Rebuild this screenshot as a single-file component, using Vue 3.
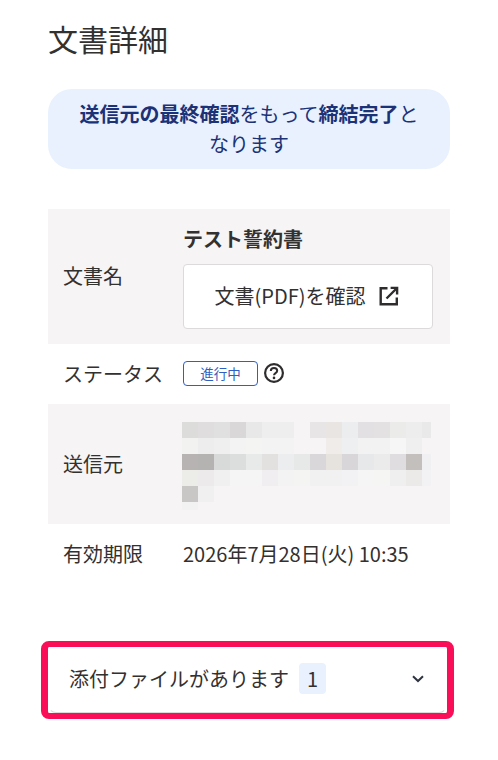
<script setup>
const rows = [
  ['#dcdcda','#dfdddd','#e0e0e0','#d9d7d8','#e9e8e9','#eeeeee','#eeeeee','','#e7e5e6','#e9e5e2','#ecedef','#e2e0e2','#e3e1e2','#ebebe9','#eeedee','#e9e9e9'],
  ['#f2f2f0','#eeedee','#f0eff0','#f4f3f4','#f4f4f2','#f4f3f4','#f4f3f4','','','#f0ecea','#eeeff0','#f3f2f3','#f3f2f3','#f7f6f7','#f0eff0',''],
  ['#b8b3b3','#b4b3b1','#d8d9d9','#dcdddd','#e8e9e9','#e2e1df','#ecedee','#e7e8e8','#d9d7d9','#e6e2de','#d8d6d9','#e7e8e9','#ecebec','#dfdddf','#c2bfbc','#f0f0f3'],
  ['#ecece9','#eceaeb','#f1f0f1','#f6f5f6','#f6f5f6','#f0eef0','#f4f3f4','#f4f4f2','#f2f1f2','#f2f1f2','#f2f1f3','#f6f5f6','#f5f5f3','#f0eff0','#ebeae8','#f2f1f3'],
  ['#c9c6c6','#f1f0f1'],
  ['#f3f2f3']
]
</script>

<template>
  <div class="page">
    <h1 class="title">文書詳細</h1>
    <p class="notice"><b>送信元の最終確認</b>をもって<b>締結完了</b>となります</p>
    <div class="table">
      <div class="row shaded">
        <div class="label">文書名</div>
        <div class="value">
          <div class="doc-name">テスト誓約書</div>
          <button class="doc-btn">
            <span class="doc-btn-text">文書(PDF)を確認</span>
            <svg class="ext" viewBox="0 0 20 20" width="20" height="20" fill="none" stroke="#2e2c2c" stroke-width="2.4">
              <path d="M8.5 2.2H1.7v16.1h16.1v-6.8" />
              <path d="M7.5 12.5 18 2M11.6 1.9h6.5v6.5" />
            </svg>
          </button>
        </div>
      </div>
      <div class="row status">
        <div class="label">ステータス</div>
        <div class="value inline">
          <span class="tag">進行中</span>
          <svg viewBox="0 0 20 20" width="20" height="20" fill="none" stroke="#2e2c2c" stroke-width="2.2">
            <circle cx="10" cy="10" r="8.9" />
            <path d="M6.8 7.9c0-1.9 1.4-3 3.2-3s3.2 1.1 3.2 2.8c0 2.4-3.2 2.4-3.2 4.5" stroke-width="2" />
            <circle cx="10" cy="14.9" r="1.3" fill="#2e2c2c" stroke="none" />
          </svg>
        </div>
      </div>
      <div class="row shaded sender">
        <div class="label">送信元</div>
        <div class="value mosaic-cell">
          <div class="mosaic">
            <div v-for="(r, i) in rows" :key="i" class="mosaic-row">
              <span v-for="(c, j) in r" :key="j" class="cell" :style="{ background: c || 'transparent' }"></span>
            </div>
          </div>
        </div>
      </div>
      <div class="row expiry">
        <div class="label">有効期限</div>
        <div class="value">2026年7月28日(火) 10:35</div>
      </div>
    </div>
    <div class="frame">
      <div class="attach">
        <div class="attach-left">
          <span>添付ファイルがあります</span>
          <span class="count">1</span>
        </div>
        <svg viewBox="0 0 12 8" width="12" height="8" fill="none" stroke="#2e3440" stroke-width="2">
          <path d="M1 1.2 6 6l5-4.8" />
        </svg>
      </div>
    </div>
  </div>
</template>

<style scoped>
.page {
  width: 498px;
  height: 760px;
  box-sizing: border-box;
  padding: 14px 48px 0;
  background: #fff;
  color: #333030;
  font-family: "Noto Sans CJK JP", "Noto Sans", sans-serif;
  overflow: hidden;
}
.title {
  margin: 0;
  font-size: 30px;
  font-weight: 400;
  line-height: 48px;
}
.notice {
  margin: 27px 0 0;
  height: 80px;
  box-sizing: border-box;
  padding: 10px 24px;
  background: #e8f1fd;
  border-radius: 24px;
  color: #1c3277;
  font-size: 20px;
  line-height: 30px;
  text-align: center;
  width: 402px;
}
.notice b { font-weight: 700; }
.table {
  margin-top: 40px;
  display: flex;
  flex-direction: column;
}
.row {
  display: flex;
  align-items: center;
  padding: 0 15px;
  font-size: 20px;
}
.shaded { background: #f6f4f5; }
.label { width: 120px; flex: none; padding-bottom: 2px; }
.value { flex: 1; min-width: 0; }
.expiry .value { padding-bottom: 2px; }
.doc-name {
  font-size: 20px;
  font-weight: 700;
  line-height: 30px;
  margin-top: 15px;
}
.doc-btn {
  display: flex;
  align-items: center;
  justify-content: center;
  gap: 14px;
  margin: 10px 0 15px;
  width: 250px;
  height: 65px;
  box-sizing: border-box;
  background: #fff;
  border: 1px solid #dcdadb;
  border-radius: 4px;
  font: inherit;
  color: inherit;
  padding: 0 2px 0 0;
}
.doc-btn-text { padding-bottom: 2px; }
.ext { margin-bottom: 1px; }
.status { height: 60px; }
.inline { display: flex; align-items: center; gap: 6px; padding-bottom: 2px; }
.tag {
  display: block;
  width: 75px;
  height: 25px;
  box-sizing: border-box;
  border: 1px solid #2f5fc0;
  border-radius: 4px;
  color: #2f5fc0;
  font-size: 13.5px;
  line-height: 23px;
  text-align: center;
}
.sender { height: 120px; }
.mosaic-cell { align-self: flex-start; }
.mosaic { margin: 18px 0 0 -1px; }
.mosaic-row { display: flex; height: 16px; }
.mosaic-row:last-child { height: 8px; }
.cell { width: 16px; flex: none; }
.cell:nth-child(16) { width: 9px; }
.expiry { height: 60px; }
.frame {
  margin: 57px 0 0 -7px;
  width: 413px;
  height: 78px;
  box-sizing: border-box;
  border-style: solid;
  border-color: #fb0e58;
  border-width: 6px 7px;
  border-radius: 8px;
  background: #fff;
}
.attach {
  height: 66px;
  box-sizing: border-box;
  padding: 0 22px 3px 20px;
  display: flex;
  align-items: center;
  justify-content: space-between;
  border: 1px solid #dcdadb;
  border-top-color: #fff;
  border-left-color: #fff;
  border-right-color: #fff;
  border-radius: 8px;
  font-size: 20px;
}
.attach-left { display: flex; align-items: center; gap: 10px; }
.count {
  width: 27px;
  height: 31px;
  background: #e8f1fd;
  border-radius: 4px;
  text-align: center;
  line-height: 31px;
}
</style>
